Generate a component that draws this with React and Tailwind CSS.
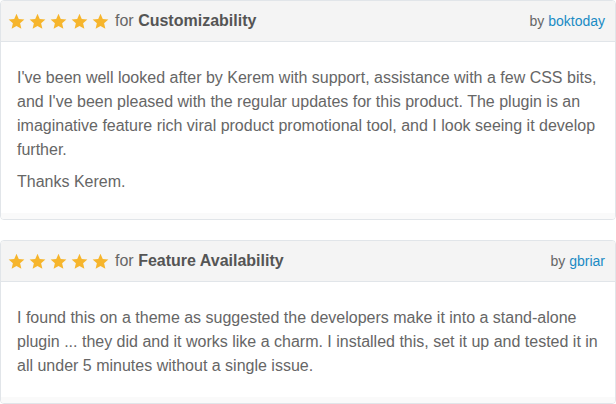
import React from "react";

const reviews = [
  {
    id: 1,
    category: "Customizability",
    author: "boktoday",
    paragraphs: [
      "I've been well looked after by Kerem with support, assistance with a few CSS bits, and I've been pleased with the regular updates for this product. The plugin is an imaginative feature rich viral product promotional tool, and I look seeing it develop further.",
      "Thanks Kerem.",
    ],
  },
  {
    id: 2,
    category: "Feature Availability",
    author: "gbriar",
    paragraphs: [
      "I found this on a theme as suggested the developers make it into a stand-alone plugin ... they did and it works like a charm. I installed this, set it up and tested it in all under 5 minutes without a single issue.",
    ],
  },
];

const Star = () => (
  <svg width="17" height="17" viewBox="0 0 24 24" className="shrink-0">
    <path
      fill="#f6b52c"
      d="M12 1.2l3.2 7.3 7.9.7-6 5.3 1.8 7.8L12 18.2l-6.9 4.1 1.8-7.8-6-5.3 7.9-.7z"
    />
  </svg>
);

const ReviewCard = ({ category, author, paragraphs }) => (
  <div className="border border-[#e1e5e9] rounded-[4px] bg-white overflow-hidden shrink-0">
    <div className="h-[41px] bg-[#f4f4f4] border-b border-[#e1e5e9] flex items-center justify-between pl-[7px] pr-[10px]">
      <div className="flex items-center">
        <div className="flex gap-[4px] mt-[1px]">
          {[0, 1, 2, 3, 4].map((i) => (
            <Star key={i} />
          ))}
        </div>
        <span className="ml-[6px] text-[16px] text-[#666]">
          for <b className="text-[#555]">{category}</b>
        </span>
      </div>
      <div className="text-[14px] text-[#666]">
        by <span className="text-[#1a8bc4]">{author}</span>
      </div>
    </div>
    <div className="px-[16px] pt-[24px] pb-[19px] text-[16px] leading-[24px] text-[#666] space-y-[8px]">
      {paragraphs.map((p, i) => (
        <p key={i}>{p}</p>
      ))}
    </div>
    <div className="h-[6px] bg-[#fafafa]" />
  </div>
);

export default function App() {
  return (
    <div className="w-[616px] h-[404px] bg-white overflow-hidden font-['Liberation_Sans',Arial,sans-serif] flex flex-col gap-[20px]">
      {reviews.map((r) => (
        <ReviewCard key={r.id} {...r} />
      ))}
    </div>
  );
}
